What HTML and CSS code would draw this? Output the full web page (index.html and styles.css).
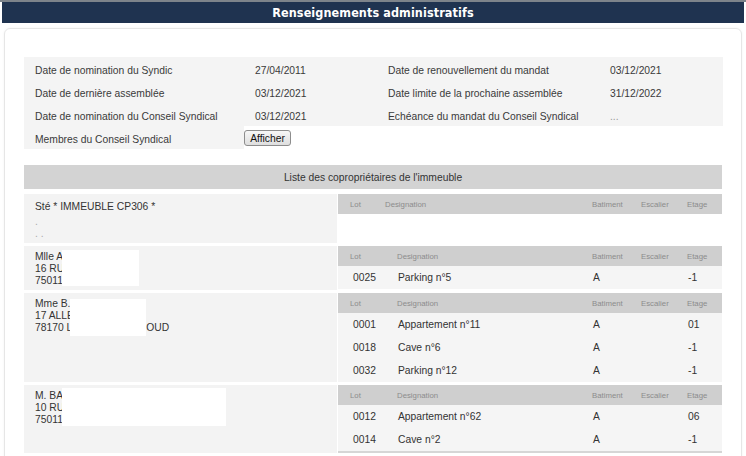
FILE: index.html
```html
<!DOCTYPE html>
<html lang="fr">
<head>
    <meta charset="UTF-8">
    <meta name="viewport" content="width=device-width, initial-scale=1.0">
    <title>Renseignements administratifs</title>
    <link rel="stylesheet" href="styles.css">
</head>
<body>
    <h1 class="title-bar">Renseignements administratifs</h1>

    <div class="panel">
        <!-- Infos syndic -->
        <div class="info">
            <span>Date de nomination du Syndic</span>
            <span>27/04/2011</span>
            <span>Date de renouvellement du mandat</span>
            <span>03/12/2021</span>

            <span>Date de dernière assemblée</span>
            <span>03/12/2021</span>
            <span>Date limite de la prochaine assemblée</span>
            <span>31/12/2022</span>

            <span>Date de nomination du Conseil Syndical</span>
            <span>03/12/2021</span>
            <span>Echéance du mandat du Conseil Syndical</span>
            <span class="muted">...</span>

            <span>Membres du Conseil Syndical</span>
            <span class="btn-cell"><button>Afficher</button></span>
            <span class="blank"></span>
            <span class="blank"></span>
        </div>

        <div class="list-title">Liste des copropriétaires de l'immeuble</div>

        <!-- Copropriétaires -->
        <div class="owner owner-first">
            <div class="owner-info">
                <p>Sté * IMMEUBLE CP306 *</p>
                <p class="dim first-dim">.</p>
                <p class="dim">. .</p>
            </div>
            <div class="lots lots-empty">
                <div class="lots-head">
                    <span>Lot</span><span>Designation</span><span>Batiment</span><span>Escalier</span><span>Etage</span>
                </div>
            </div>
        </div>

        <div class="owner">
            <div class="owner-info">
                <p>Mlle A</p>
                <p>16 RU</p>
                <p>75011</p>
                <div class="mask mask-a"></div>
            </div>
            <div class="lots">
                <div class="lots-head">
                    <span>Lot</span><span>Designation</span><span>Batiment</span><span>Escalier</span><span>Etage</span>
                </div>
                <div class="lot-row">
                    <span>0025</span><span>Parking n°5</span><span>A</span><span></span><span>-1</span>
                </div>
            </div>
        </div>

        <div class="owner">
            <div class="owner-info">
                <p>Mme B.</p>
                <p>17 ALLE</p>
                <p>78170 L<span class="gap"></span>OUD</p>
                <div class="mask mask-b"></div>
            </div>
            <div class="lots">
                <div class="lots-head">
                    <span>Lot</span><span>Designation</span><span>Batiment</span><span>Escalier</span><span>Etage</span>
                </div>
                <div class="lot-row">
                    <span>0001</span><span>Appartement n°11</span><span>A</span><span></span><span>01</span>
                </div>
                <div class="lot-row">
                    <span>0018</span><span>Cave n°6</span><span>A</span><span></span><span>-1</span>
                </div>
                <div class="lot-row">
                    <span>0032</span><span>Parking n°12</span><span>A</span><span></span><span>-1</span>
                </div>
            </div>
        </div>

        <div class="owner">
            <div class="owner-info">
                <p>M. BA</p>
                <p>10 RU</p>
                <p>75011</p>
                <div class="mask mask-c"></div>
            </div>
            <div class="lots lots-last">
                <div class="lots-head">
                    <span>Lot</span><span>Designation</span><span>Batiment</span><span>Escalier</span><span>Etage</span>
                </div>
                <div class="lot-row">
                    <span>0012</span><span>Appartement n°62</span><span>A</span><span></span><span>06</span>
                </div>
                <div class="lot-row">
                    <span>0014</span><span>Cave n°2</span><span>A</span><span></span><span>-1</span>
                </div>
            </div>
        </div>
    </div>
</body>
</html>
```

FILE: styles.css
```css
/* Reset */
* {
    margin: 0;
    padding: 0;
    box-sizing: border-box;
}
html, body {
    overflow: hidden;
}
body {
    font-family: "Liberation Sans", Arial, sans-serif;
    font-size: 10.3px;
    color: #3a3a3a;
    background: #fff;
    border-top: 2px solid #7d848b;
}
.title-bar {
    margin: 0 2px;
    height: 21px;
    line-height: 22px;
    background: #1f3350;
    color: #fff;
    text-align: center;
    font-family: "Liberation Sans Narrow", "DejaVu Sans Condensed", "Roboto Condensed", sans-serif;
    font-weight: bold;
    font-size: 12.5px;
    letter-spacing: 0.1px;
}
.panel {
    margin: 5px 4px 0;
    border: 1px solid #e6e6e6;
    border-radius: 6px;
    padding: 28px 19px 20px;
    box-shadow: 0 0 3px rgba(0, 0, 0, 0.05);
}

/* Infos */
.info {
    display: grid;
    grid-template-columns: 220px 133px 222px 124px;
    grid-auto-rows: 23px;
}
.info span {
    display: flex;
    align-items: center;
    padding: 3px 0 0 11px;
    background: #f4f4f4;
}
.info .muted {
    color: #999;
}
.info .blank,
.info .btn-cell {
    background: transparent;
}
.info .btn-cell {
    padding: 1px 0 0;
}
button {
    font-family: inherit;
    font-size: 10.3px;
    color: #111;
    width: 47px;
    height: 16px;
    border: 1px solid #8d8d8d;
    border-radius: 3px;
    background: linear-gradient(#f7f7f7, #dedede);
    cursor: pointer;
}

.list-title {
    margin-top: 16px;
    height: 24px;
    line-height: 26px;
    background: #d3d3d3;
    text-align: center;
    color: #333;
}

/* Copropriétaires */
.owner {
    display: grid;
    grid-template-columns: 313px 1fr;
    gap: 1px;
    margin-top: 3px;
}
.owner-first {
    margin-top: 5px;
}
.owner-info {
    position: relative;
    background: #f3f3f3;
    padding: 5px 11px 3px;
    line-height: 12px;
    color: #333;
}
.owner-first .owner-info {
    padding-top: 7px;
}
.dim {
    color: #aaa;
}
.first-dim {
    margin-top: 3px;
}
.gap {
    display: inline-block;
    width: 74px;
}
.mask {
    position: absolute;
    background: #fff;
}
.mask-a {
    left: 38px;
    top: 4px;
    width: 77px;
    height: 36px;
}
.mask-b {
    left: 46px;
    top: 6px;
    width: 76px;
    height: 37px;
}
.mask-c {
    left: 38px;
    top: 3px;
    width: 164px;
    height: 38px;
}

.lots-head,
.lot-row {
    display: grid;
    grid-template-columns: 47px 195px 49px 46px 1fr;
    align-items: center;
}
.lots-empty .lots-head {
    grid-template-columns: 35px 207px 49px 46px 1fr;
}
.lots-head {
    height: 20px;
    background: #cfcfcf;
    font-size: 7.8px;
    color: #8c8c8c;
}
.lots-head span {
    padding-left: 12px;
}
.lot-row {
    height: 23px;
    background: #f5f5f5;
    color: #333;
}
.lot-row span {
    padding-left: 13px;
}
.lot-row span:first-child {
    padding-left: 15px;
}
.lots-last {
    border-bottom: 2px solid #d6d6d6;
}
```
